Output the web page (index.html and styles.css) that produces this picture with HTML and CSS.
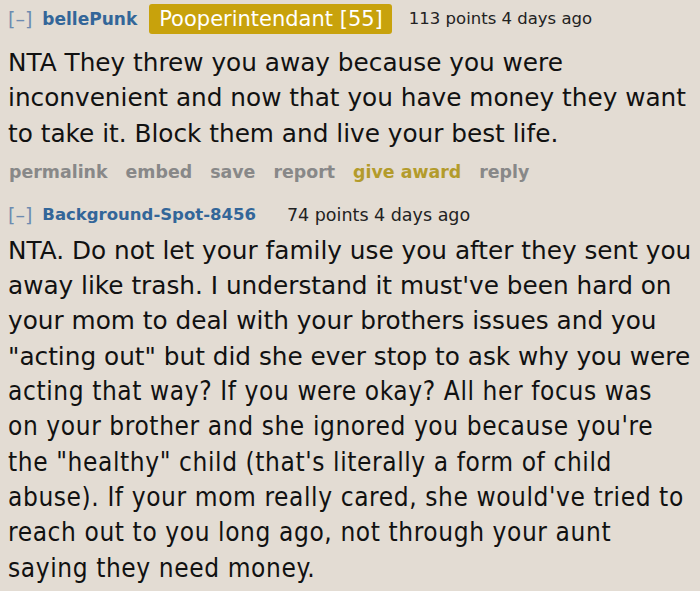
FILE: index.html
```html
<!DOCTYPE html>
<html>
<head>
<meta charset="utf-8">
<link rel="stylesheet" href="styles.css">
</head>
<body>
<div class="page">
  <div class="comment">
    <div class="tagline">
      <span class="expand">[–]</span>
      <span class="author">bellePunk</span>
      <span class="flair">Pooperintendant [55]</span>
      <span class="score">113 points 4 days ago</span>
    </div>
    <div class="md">NTA They threw you away because you were<br>inconvenient and now that you have money they want<br>to take it. Block them and live your best life.</div>
    <ul class="buttons">
      <li>permalink</li>
      <li>embed</li>
      <li>save</li>
      <li>report</li>
      <li class="award">give award</li>
      <li>reply</li>
    </ul>
  </div>
  <div class="comment">
    <div class="tagline second">
      <span class="expand">[–]</span>
      <span class="author">Background-Spot-8456</span>
      <span class="score">74 points 4 days ago</span>
    </div>
    <div class="md">NTA. Do not let your family use you after they sent you<br>away like trash. I understand it must've been hard on<br>your mom to deal with your brothers issues and you<br>"acting out" but did she ever stop to ask why you were</div>
    <div class="md condensed">acting that way? If you were okay? All her focus was<br>on your brother and she ignored you because you're<br>the "healthy" child (that's literally a form of child<br>abuse). If your mom really cared, she would've tried to<br>reach out to you long ago, not through your aunt<br>saying they need money.</div>
  </div>
</div>
</body>
</html>
```

FILE: styles.css
```css
html, body {
  margin: 0;
  padding: 0;
  background: #e3dcd3;
}
.page {
  width: 700px;
  height: 591px;
  overflow: hidden;
  padding: 0 0 0 8px;
  box-sizing: border-box;
  font-family: "DejaVu Sans", Verdana, sans-serif;
  color: #111;
}
.tagline {
  display: flex;
  align-items: center;
  height: 37px;
  font-size: 17px;
  white-space: nowrap;
}
.expand {
  color: #6d8bb0;
  font-size: 19px;
  margin-right: 10px;
}
.author {
  color: #336699;
  font-weight: bold;
  margin-right: 12px;
}
.flair {
  background: #c8a20c;
  color: #fff;
  font-size: 21px;
  line-height: 30px;
  padding: 0 9px 0 10px;
  border-radius: 3px;
  margin-right: 17px;
}
.score {
  color: #222;
  font-size: 16.5px;
}
.second {
  height: 36px;
}
.second .author {
  font-size: 16.5px;
  margin-right: 31px;
}
.second .score {
  font-size: 17.5px;
}
.md {
  font-size: 24.75px;
  line-height: 35.3px;
  white-space: nowrap;
}
.comment:first-child .md {
  margin-top: 8px;
}
.comment + .comment .md:first-of-type {
  margin-top: 1px;
}
.condensed {
  font-family: "DejaVu Sans Condensed", "DejaVu Sans", sans-serif;
  font-stretch: condensed;
  font-size: 26px;
  letter-spacing: 0.6px;
}
.buttons {
  list-style: none;
  margin: 0;
  padding: 11.5px 0 0 1px;
  display: flex;
  gap: 18px;
  font-size: 17.4px;
  line-height: 20px;
  font-weight: bold;
  color: #888;
  height: 46px;
  box-sizing: border-box;
  align-items: flex-start;
}
.buttons .award {
  color: #b39b2b;
}
```
